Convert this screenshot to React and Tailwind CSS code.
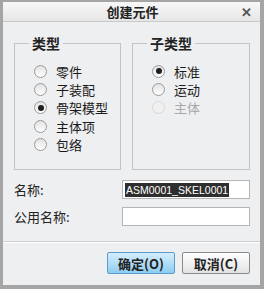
import React from "react";

const font = { fontFamily: '"Noto Sans CJK SC", "Liberation Sans", sans-serif' };

function Radio({ checked, disabled, label }) {
  return (
    <div className="flex items-center h-[18.3px] gap-[9px]">
      <span
        className={
          "w-[13px] h-[13px] rounded-full border flex items-center justify-center shrink-0 " +
          (disabled
            ? "border-[#d8d8d8] bg-[#f0f0f0]"
            : "border-[#9a9a9a] bg-gradient-to-b from-[#e2e2e2] to-[#ffffff]")
        }
      >
        {checked && <span className="w-[6px] h-[6px] rounded-full bg-[#1e1e1e]" />}
      </span>
      <span className={"text-[13px] leading-none " + (disabled ? "text-[#a8a8a8]" : "text-[#1a1a1a]")}>
        {label}
      </span>
    </div>
  );
}

function Group({ title, width, children }) {
  return (
    <div className={"h-[127px] border border-[#c3c3c3] flex flex-col " + width}>
      <span className="-mt-[9px] ml-[14px] w-fit px-[3px] bg-[#eeeff1] text-[14px] font-bold text-[#222] leading-[16px]">
        {title}
      </span>
      <div className="pl-[19px] pt-[11px]">{children}</div>
    </div>
  );
}

export default function App() {
  return (
    <div
      style={font}
      className="w-[264px] h-[289px] bg-[#eeeff1] border-l-[3px] border-t-[2px] border-r-[4px] border-b-[4px] border-[#a5a5a5] flex flex-col"
    >
      <div className="h-[20px] shrink-0 bg-gradient-to-b from-[#f8f8f8] to-[#e6e6e6] border-b border-[#c9c9c9] flex items-center relative">
        <span className="flex-1 text-center text-[13px] font-bold text-[#222] leading-none pl-[2px]">创建元件</span>
        <span className="absolute right-[8px] top-[3px] text-[13px] font-bold text-[#555] leading-none">✕</span>
      </div>
      <div className="flex gap-[11px] pl-[11px] pt-[21px]">
        <Group title="类型" width="w-[107px]">
          <Radio label="零件" />
          <Radio label="子装配" />
          <Radio label="骨架模型" checked />
          <Radio label="主体项" />
          <Radio label="包络" />
        </Group>
        <Group title="子类型" width="w-[118px]">
          <Radio label="标准" checked />
          <Radio label="运动" />
          <Radio label="主体" disabled />
        </Group>
      </div>
      <div className="flex flex-col gap-[8px] pl-[11px] pt-[10px]">
        <div className="flex items-center">
          <span className="w-[108px] text-[13px] text-[#222] leading-none">名称:</span>
          <div className="w-[128px] h-[19px] bg-white border border-[#b5b5b5] flex items-center pl-[2px]">
            <span
              className="bg-[#2e2e2e] text-white text-[10.5px] leading-[14px] px-[1px]"
              style={{ fontFamily: '"Liberation Sans", sans-serif' }}
            >
              ASM0001_SKEL0001
            </span>
          </div>
        </div>
        <div className="flex items-center">
          <span className="w-[108px] text-[13px] text-[#222] leading-none">公用名称:</span>
          <div className="w-[128px] h-[19px] bg-white border border-[#b5b5b5]" />
        </div>
      </div>
      <div className="mt-[15px] border-t border-[#cdcdcd] border-b border-b-white" />
      <div className="flex justify-end gap-[7px] pr-[10px] pt-[9px]">
        <button className="w-[68px] h-[22px] border border-[#5c9ccd] rounded-[2px] bg-gradient-to-b from-[#d5eefc] to-[#8ccdf1] text-[13px] font-bold text-[#222] leading-none">
          确定(O)
        </button>
        <button className="w-[68px] h-[22px] border border-[#8a8a8a] rounded-[2px] bg-gradient-to-b from-[#ffffff] to-[#e2e2e2] text-[13px] font-bold text-[#222] leading-none">
          取消(C)
        </button>
      </div>
    </div>
  );
}
